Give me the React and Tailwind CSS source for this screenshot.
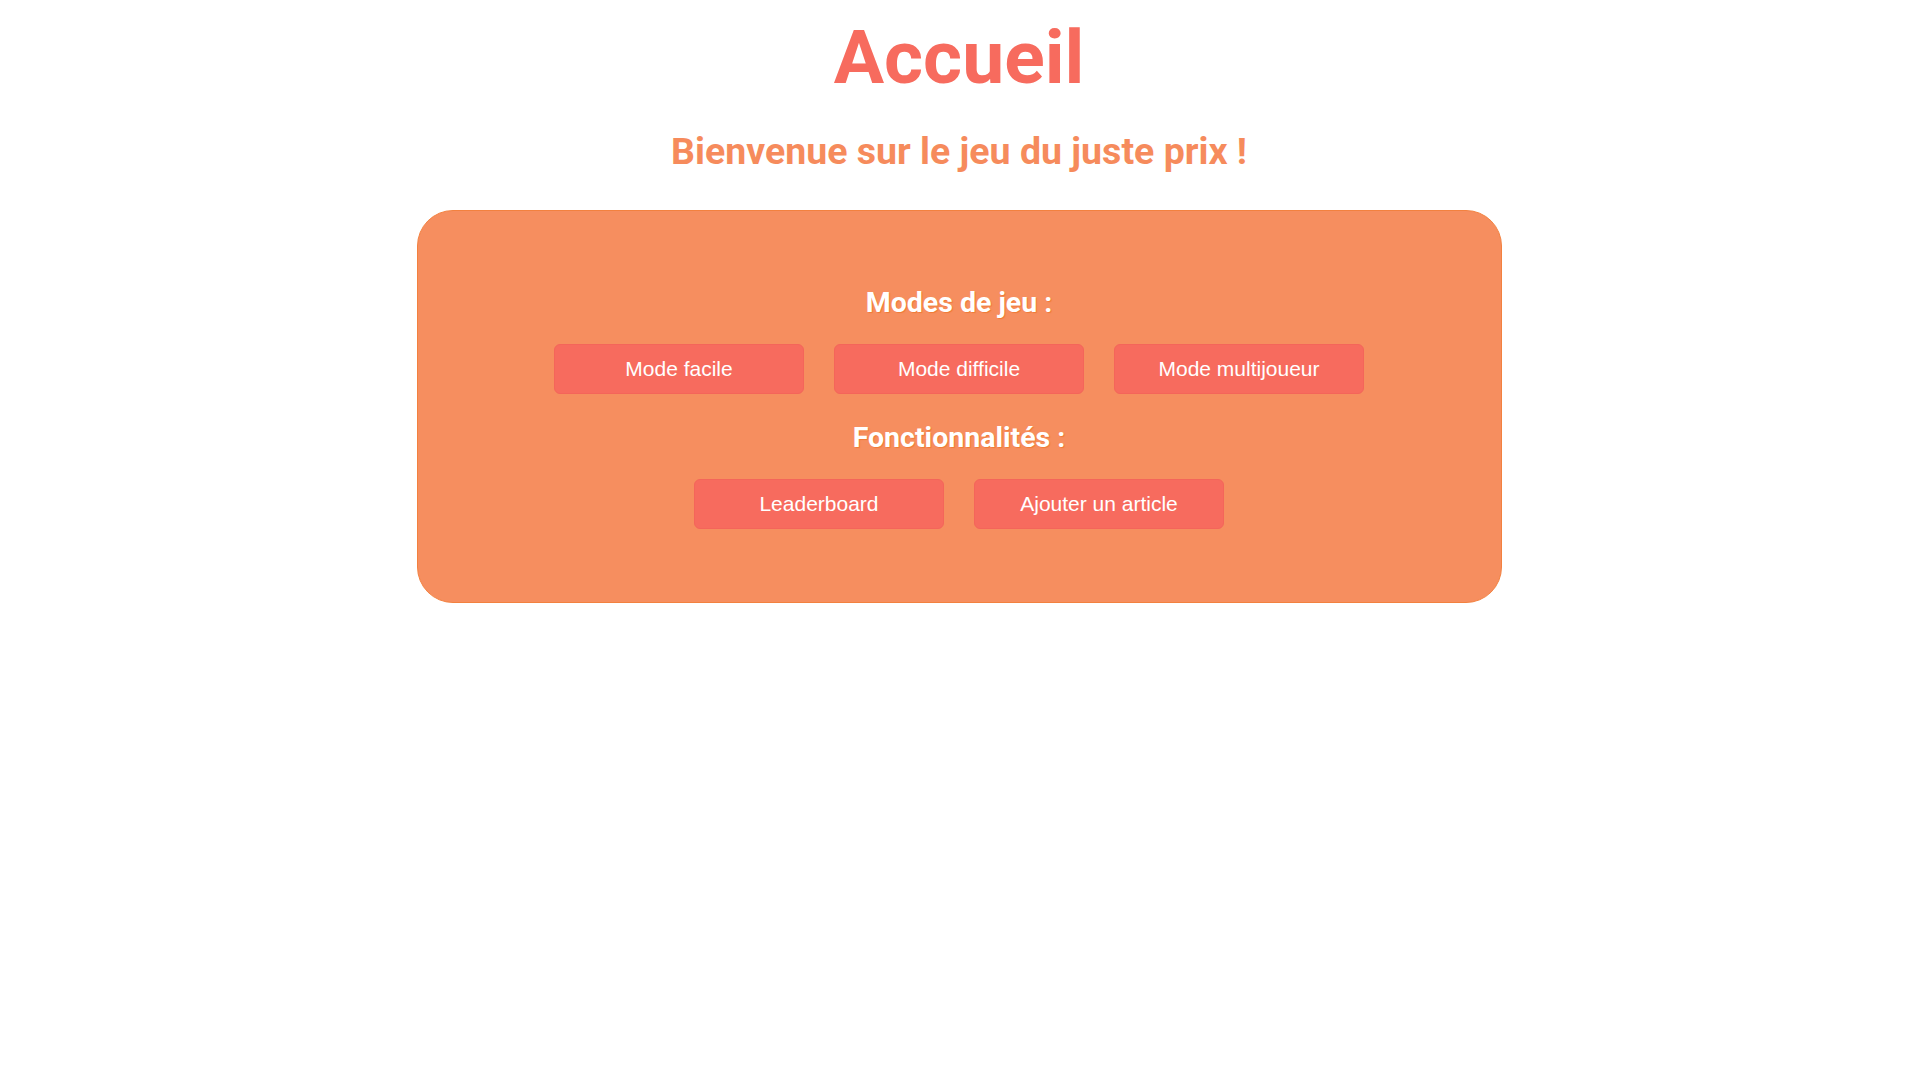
import React from 'react';

const modes = ['Mode facile', 'Mode difficile', 'Mode multijoueur'];
const features = ['Leaderboard', 'Ajouter un article'];

const GameButton = ({ label }) => (
  <button className="w-[250px] h-[50px] rounded-[6px] border border-[#f4655a] bg-[#f76b5e] text-white text-[21px] font-['Liberation_Sans',Arial,sans-serif]">
    {label}
  </button>
);

const Home = () => {
  return (
    <div className="min-h-screen bg-white font-['Roboto',sans-serif] flex flex-col items-center">
      <h1 className="mt-[20px] text-[75px] leading-none font-bold text-[#f76b5e]">Accueil</h1>
      <h2 className="mt-[38px] text-[37.5px] leading-none font-bold text-[#f68b5c]">
        Bienvenue sur le jeu du juste prix !
      </h2>

      <section className="mt-[39px] w-[1085px] rounded-[36px] border border-[#f3813f] bg-[#f68e5f] pt-[78px] pb-[73px] flex flex-col items-center">
        <h3 className="text-[28.5px] leading-[27px] font-bold text-white [text-shadow:1px_1px_1px_#f07a35]">Modes de jeu :</h3>
        <div className="mt-[28px] flex gap-[30px]">
          {modes.map((m) => (
            <GameButton key={m} label={m} />
          ))}
        </div>

        <h3 className="mt-[30px] text-[28.5px] leading-[27px] font-bold text-white [text-shadow:1px_1px_1px_#f07a35]">Fonctionnalités :</h3>
        <div className="mt-[28px] flex gap-[30px]">
          {features.map((f) => (
            <GameButton key={f} label={f} />
          ))}
        </div>
      </section>
    </div>
  );
};

export default Home;
